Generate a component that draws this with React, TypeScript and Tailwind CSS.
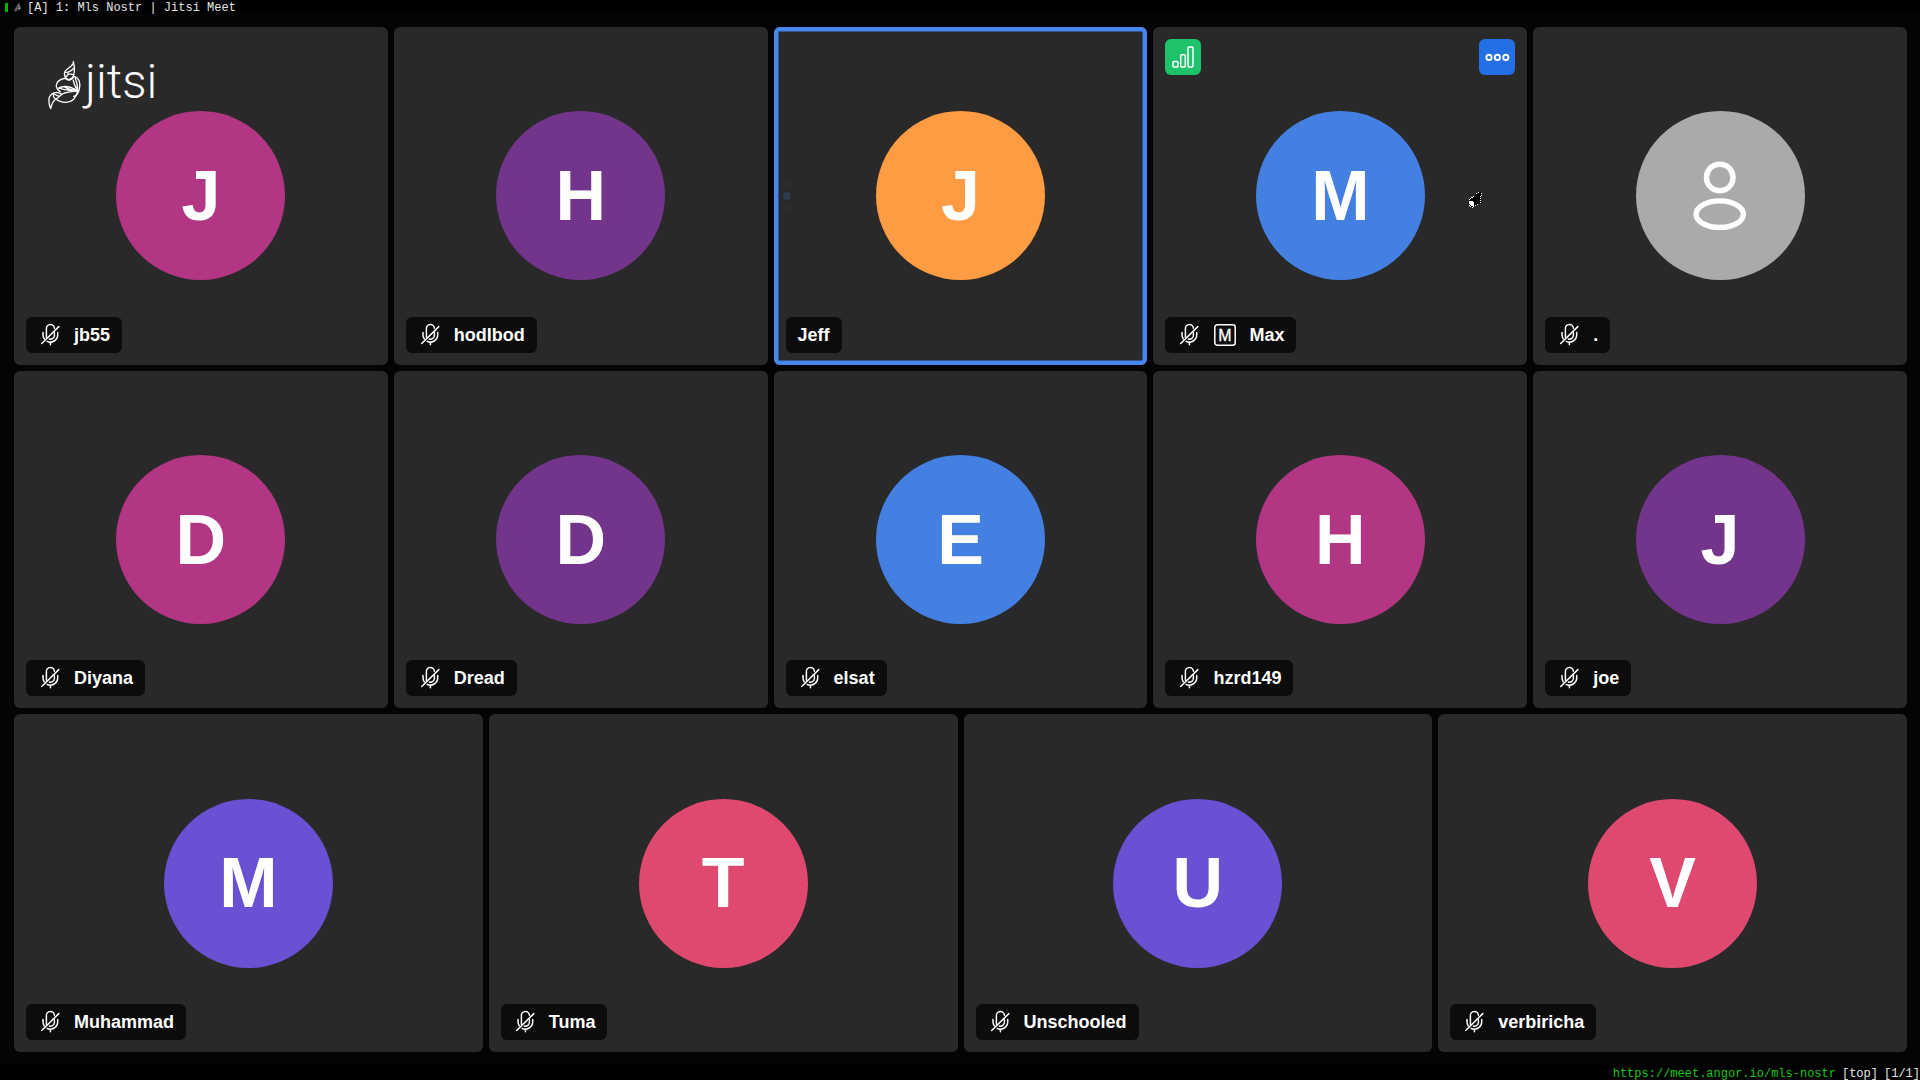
import React from 'react';

interface Participant {
  name: string;
  initial?: string;
  color: string;
  muted?: boolean;
  moderator?: boolean;
  speaking?: boolean;
  hovered?: boolean;
}

const rows: Participant[][] = [
  [
    { name: 'jb55', initial: 'J', color: 'bg-[#b23683]', muted: true },
    { name: 'hodlbod', initial: 'H', color: 'bg-[#73348c]', muted: true },
    { name: 'Jeff', initial: 'J', color: 'bg-[#ff9b42]', speaking: true },
    { name: 'Max', initial: 'M', color: 'bg-[#4380e2]', muted: true, moderator: true, hovered: true },
    { name: '.', color: 'bg-[#aaaaaa]', muted: true },
  ],
  [
    { name: 'Diyana', initial: 'D', color: 'bg-[#b23683]', muted: true },
    { name: 'Dread', initial: 'D', color: 'bg-[#73348c]', muted: true },
    { name: 'elsat', initial: 'E', color: 'bg-[#4380e2]', muted: true },
    { name: 'hzrd149', initial: 'H', color: 'bg-[#b23683]', muted: true },
    { name: 'joe', initial: 'J', color: 'bg-[#73348c]', muted: true },
  ],
  [
    { name: 'Muhammad', initial: 'M', color: 'bg-[#6a50d3]', muted: true },
    { name: 'Tuma', initial: 'T', color: 'bg-[#df486f]', muted: true },
    { name: 'Unschooled', initial: 'U', color: 'bg-[#6a50d3]', muted: true },
    { name: 'verbiricha', initial: 'V', color: 'bg-[#df486f]', muted: true },
  ],
];

const MicOffIcon: React.FC = () => (
  <svg viewBox="0 0 24 24" className="w-6 h-6 shrink-0" fill="none" stroke="#fff" strokeWidth="1.5" strokeLinecap="round">
    <path d="M8.4 14.2V5.6a4 4 0 0 1 8 -0.4" />
    <path d="M16.4 9.6v2.6a4 4 0 0 1 -5 3.9" />
    <path d="M5 9.6v2.2c0 1.6 0.5 3 1.3 4.1" />
    <path d="M19.7 9.6v2.2a7.3 7.3 0 0 1 -10.6 6.5" />
    <path d="M12.4 19.2v2.6" />
    <path d="M3.7 20.5L20.8 3.6" />
  </svg>
);

const ModeratorIcon: React.FC = () => (
  <svg viewBox="0 0 24 24" className="w-6 h-6 shrink-0" fill="none" stroke="#fff">
    <rect x="1.8" y="1.8" width="20.4" height="20.4" rx="2.5" strokeWidth="1.5" />
    <text x="12" y="18" textAnchor="middle" fontSize="16" fill="#fff" strokeWidth="0.3">
      M
    </text>
  </svg>
);

const SignalIcon: React.FC = () => (
  <svg viewBox="0 0 36 36" className="w-9 h-9" fill="none" stroke="#fff" strokeWidth="1.5">
    <rect x="8" y="22.5" width="5" height="5.5" rx="1" />
    <rect x="15.7" y="15.7" width="4.6" height="12.3" rx="1" />
    <rect x="23" y="8" width="5" height="20" rx="1" />
  </svg>
);

const MoreIcon: React.FC = () => (
  <svg viewBox="0 0 36 36" className="w-9 h-9" fill="none" stroke="#fff" strokeWidth="1.9">
    <circle cx="10" cy="18.4" r="2.6" />
    <circle cx="18.4" cy="18.4" r="2.6" />
    <circle cx="26.8" cy="18.4" r="2.6" />
  </svg>
);

const PersonIcon: React.FC = () => (
  <svg viewBox="0 0 54 70" className="w-[54px] h-[70px]" fill="none" stroke="#fff" strokeWidth="5.4">
    <rect x="13.5" y="3.2" width="26.5" height="26.5" rx="13" />
    <ellipse cx="26.7" cy="53.2" rx="23.6" ry="13.3" />
  </svg>
);

const JitsiMark: React.FC<{ className: string; width: number }> = ({ className, width }) => (
  <svg viewBox="0 0 100 148" className={className} fill="none" stroke="currentColor" strokeWidth={width} strokeLinejoin="round">
    <path d="M77 2C78 14 58 22 52 30C48 40 50 50 60 56C70 56 76 50 78 42C81 30 80 15 77 2Z" />
    <path d="M52 34C60 36 70 30 78 22M55 48C60 38 70 38 78 42M62 36L57 46" />
    <path d="M52 52C38 54 25 62 25 74C25 82 30 88 38 94M52 52C62 62 74 58 79 46C92 50 98 62 96 78C94 96 86 106 76 108" />
    <path d="M82 50C88 64 90 78 90 90M76 56C78 68 84 80 90 90" />
    <path d="M32 82C46 74 66 76 90 90C74 92 54 88 32 82ZM50 78C60 84 70 88 90 90" />
    <path d="M90 90C86 110 74 124 54 125C42 125 32 122 24 115C34 110 40 98 52 96C66 92 80 92 90 90Z" />
    <path d="M24 115C16 120 11 130 8 144C4 134 2 124 3 114C5 104 14 95 26 95C32 96 38 98 42 101M24 115C16 112 15 104 18 98M18 98C22 102 26 106 34 106" />
  </svg>
);

const Tile: React.FC<{ participant: Participant }> = ({ participant }) => {
  const { name, initial, color, muted, moderator, speaking, hovered } = participant;
  return (
    <article
      className={`relative flex-1 min-w-0 flex items-center justify-center rounded-md bg-[#292929] ${
        speaking ? 'shadow-[inset_0_0_0_4px_#4687ed,inset_0_0_0_5px_#31558c]' : ''
      }`}
    >
      <div className={`w-[169px] h-[169px] rounded-full flex items-center justify-center ${color}`}>
        {initial ? <span className="text-[70px] leading-none font-bold">{initial}</span> : <PersonIcon />}
      </div>

      {speaking && (
        <div className="absolute left-[9px] top-1/2 -translate-y-1/2 flex flex-col gap-[3px]">
          <span className="w-2 h-2 rounded-full bg-[#2b2c30]" />
          <span className="w-2 h-2 rounded-full bg-[#2c3c4c]" />
          <span className="w-2 h-2 rounded-full bg-[#2b2c30]" />
        </div>
      )}

      {hovered && (
        <div className="absolute top-3 inset-x-3 flex justify-between">
          <button type="button" aria-label="Connection info" className="w-9 h-9 rounded-md bg-[#1ec26a]">
            <SignalIcon />
          </button>
          <button type="button" aria-label="More options" className="w-9 h-9 rounded-md bg-[#246fe5]">
            <MoreIcon />
          </button>
        </div>
      )}

      {/* mouse pointer */}
      {hovered && (
        <svg viewBox="0 0 14 17" className="absolute right-[44px] top-[165px] w-[14px] h-[17px]" shapeRendering="crispEdges">
          <path d="M1 7L4 5L8 1L11 0L13 2L11 5L12 9L10 12L5 14L3 16L1 14L0 10Z" fill="#000" stroke="#fff" strokeDasharray="1 1" />
          <path d="M0 9H3L5 11V14H2L0 12Z" fill="#fff" />
        </svg>
      )}

      <div className="absolute left-3 bottom-3 h-9 px-3 flex items-center gap-3 rounded-md bg-[#0c0c0c]">
        {muted && <MicOffIcon />}
        {moderator && <ModeratorIcon />}
        <span className="text-lg leading-6 font-bold">{name}</span>
      </div>
    </article>
  );
};

const App: React.FC = () => {
  return (
    <div className="min-h-screen flex flex-col bg-[#040404] text-white font-['Liberation_Sans',Arial,sans-serif]">
      <header className="h-[13px] flex items-center bg-black pt-[2px] pl-[5px] font-['Liberation_Mono',monospace] text-xs leading-3 text-[#e6e6e6] whitespace-pre">
        <span className="w-[3px] h-[9px] bg-[#00b400]" />
        <JitsiMark className="w-[7px] h-[9px] mx-[6px] text-[#aaaaaa]" width={8} />
        <span>[A] 1: Mls Nostr | Jitsi Meet</span>
      </header>

      <main className="relative flex-1 flex flex-col gap-[6px] pt-[14px] pb-[13px] pl-[14px] pr-[13px]">
        {rows.map((row, i) => (
          <section key={i} className="flex-1 min-h-[240px] flex gap-[6px]">
            {row.map((participant) => (
              <Tile key={participant.name} participant={participant} />
            ))}
          </section>
        ))}

        <a href="https://jitsi.org" className="absolute left-12 top-12 flex items-start gap-1">
          <JitsiMark className="w-[33px] h-[49px]" width={4} />
          <span className="font-[Roboto,sans-serif] font-light text-5xl leading-[42px]">jitsi</span>
        </a>
      </main>

      <footer className="h-[15px] flex items-center justify-end gap-[6px] bg-black pt-[2px] font-['Liberation_Mono',monospace] text-xs leading-3 text-[#e6e6e6]">
        <a href="https://meet.angor.io/mls-nostr" className="text-[#14c814]">https://meet.angor.io/mls-nostr</a>
        <span>[top]</span>
        <span>[1/1]</span>
      </footer>
    </div>
  );
};

export default App;
